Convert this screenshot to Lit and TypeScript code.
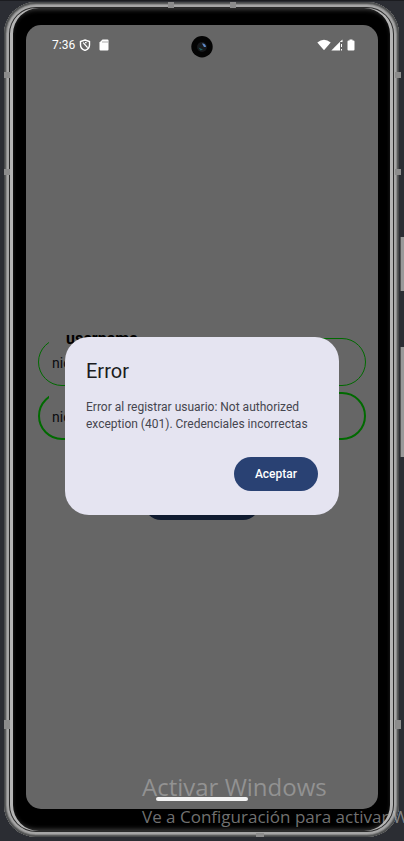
import { LitElement, html, css, svg } from "lit";
import { customElement, state } from "lit/decorators.js";

const shieldIcon = svg`<path d="M6 1 L10.500 2.500 V6 C10.500 8.600 8.600 10.500 6 11.400 C3.400 10.500 1.500 8.600 1.500 6 V2.500 Z" fill="none" stroke="#fff" stroke-width="1.400"/><path d="M4.200 3.600 L8.600 8.600 M6 3.600 L7.600 3.600" fill="none" stroke="#fff" stroke-width="1.300"/>`;

@customElement("phone-status")
class PhoneStatus extends LitElement {
  static styles = css`
    :host {
      display: flex;
      align-items: center;
      justify-content: space-between;
      height: 39px;
      padding: 0 23px 0 26px;
      color: #fff;
      font: 12px/16px Roboto, sans-serif;
    }
    .group { display: flex; align-items: center; }
    svg { display: block; }
    .shield { margin-left: 4px; }
    .card { margin-left: 7px; }
    .battery { margin-left: 4px; }
  `;
  render() {
    return html`
      <div class="group">
        <span>7:36</span>
        <svg class="shield" width="12" height="12" viewBox="0 0 12 12">${shieldIcon}</svg>
        <svg class="card" width="12" height="12" viewBox="0 0 12 12">
          <path d="M4.500 0.500 H9.500 Q10.500 0.500 10.500 1.500 V10.500 Q10.500 11.500 9.500 11.500 H2.500 Q1.500 11.500 1.500 10.500 V3.500 Z" fill="#fff"/>
          <path d="M5 2 V4 M7 2 V4 M9 2 V4" stroke="#888" stroke-width="0.700"/>
        </svg>
      </div>
      <div class="group">
        <svg width="14" height="12" viewBox="0 0 14 12">
          <path d="M0.300 3.500 Q7 -1.800 13.700 3.500 L7 11.200 Z" fill="#fff"/>
        </svg>
        <svg width="12" height="12" viewBox="0 0 12 12">
          <path d="M0.300 11.500 L9 2.800 V11.500 Z" fill="#fff"/>
          <path d="M9 2.800 L11.500 0.500 V3 H9 Z M10 5 H11 V8 H10 Z M10 10 H11 V11.500 H10 Z" fill="#fff"/>
        </svg>
        <svg class="battery" width="8" height="12" viewBox="0 0 8 12">
          <path d="M2.500 0.500 H5.500 V1.500 H6.500 Q7.500 1.500 7.500 2.500 V10.500 Q7.500 11.500 6.500 11.500 H1.500 Q0.500 11.500 0.500 10.500 V2.500 Q0.500 1.500 1.500 1.500 H2.500 Z" fill="#fff"/>
        </svg>
      </div>
    `;
  }
}

@customElement("login-form")
class LoginForm extends LitElement {
  static styles = css`
    form {
      display: flex;
      flex-direction: column;
      gap: 2px;
      margin: 0;
      padding-top: 1px;
      font-family: Roboto, sans-serif;
    }
    fieldset {
      min-width: 0;
      margin: 0;
      padding: 0 13px;
      border: 1px solid #006a00;
      border-radius: 24px;
    }
    fieldset.focused { padding: 0 12px; border-width: 2px; }
    legend {
      height: 10px;
      margin-left: -3px;
      padding: 0 17px;
      color: #000;
      font-size: 16px;
      font-weight: 700;
      line-height: 10px;
    }
    input {
      display: block;
      box-sizing: border-box;
      width: 100%;
      height: 41px;
      padding: 0 0 2px;
      border: 0;
      outline: 0;
      background: none;
      color: #0b0c0f;
      font: 14px/20px Roboto, sans-serif;
    }
    .focused input { height: 40px; }
    button {
      align-self: center;
      width: 116px;
      height: 34px;
      margin-top: 44px;
      border: 0;
      border-radius: 17px;
      background: #101b30;
      color: #666;
      font: 500 12px/16px Roboto, sans-serif;
    }
  `;
  render() {
    return html`
      <form @submit=${(e: Event) => e.preventDefault()}>
        <fieldset>
          <legend>username</legend>
          <input type="text" aria-label="username" .value=${"nico"} />
        </fieldset>
        <fieldset class="focused">
          <legend>password</legend>
          <input type="text" aria-label="password" .value=${"nico"} />
        </fieldset>
        <button type="submit">Registrar</button>
      </form>
    `;
  }
}

@customElement("app-root")
class AppRoot extends LitElement {
  @state() private open = true;

  static styles = css`
    :host {
      display: flex;
      position: relative;
      box-sizing: border-box;
      min-height: 100vh;
      padding: 1px 5px 4px 4px;
      border-top: 1px solid #1b1c20;
      overflow: hidden;
      background: #2b2d33;
    }
    .phone {
      display: flex;
      flex: 1;
      position: relative;
      box-sizing: border-box;
      min-width: 0;
      padding: 23px 21px 28px 22px;
      border-radius: 32px;
      background: #000;
      box-shadow:
        inset 0 0 0 1px #484a4b,
        inset 0 0 0 2px #5c5d5d,
        inset 0 0 0 3px #8a8a8a,
        inset 0 0 0 5px #a6a6a6,
        inset 0 0 0 6px #2a2a2a,
        inset 3px 0 0 6px #b4b4b4,
        inset -3px 0 0 6px #b4b4b4,
        inset 0 0 4px 8px #3a3a3a;
    }
    .screen {
      display: flex;
      flex: 1;
      flex-direction: column;
      position: relative;
      min-width: 0;
      border-radius: 15px;
      background: #666;
      overflow: hidden;
    }
    .camera {
      position: absolute;
      top: 11px;
      left: 50%;
      margin-left: -11px;
    }
    main {
      display: grid;
      flex: 1;
      align-items: center;
      margin-top: -21px;
    }
    login-form { grid-area: 1 / 1; padding: 0 12px; }
    dialog {
      display: block;
      position: relative;
      grid-area: 1 / 1;
      box-sizing: border-box;
      width: auto;
      margin: 0 39px;
      padding: 21px 21px 24px;
      border: 0;
      border-radius: 24px;
      background: #e5e4f1;
      color: #1a1b21;
      font-family: Roboto, sans-serif;
    }
    dialog:not([open]) { display: none; }
    h1 { margin: 0; font-size: 20px; font-weight: 400; line-height: 27px; }
    p { margin: 14px 0 24px; color: #45464f; font-size: 12px; line-height: 17px; }
    .actions { display: flex; justify-content: flex-end; }
    .actions button {
      height: 34px;
      padding: 0 21px;
      border: 0;
      border-radius: 17px;
      background: #294173;
      color: #fff;
      font: 500 12px/16px Roboto, sans-serif;
    }
    .handle {
      position: absolute;
      bottom: 40px;
      left: 50%;
      width: 92px;
      height: 4px;
      margin-left: -46px;
      border-radius: 2px;
      background: #f4f4f4;
    }
    .watermark {
      position: absolute;
      left: 142px;
      bottom: 10px;
      color: rgba(190, 190, 190, 0.5);
      font-family: "Open Sans", sans-serif;
      white-space: nowrap;
      pointer-events: none;
    }
    .big { font-size: 24px; line-height: 32px; }
    .small { color: rgba(190, 190, 190, 0.6); font-size: 17px; line-height: 28px; }
    .mark { position: absolute; width: 6px; height: 6px; background: #8c8c8c; }
    .left { left: 0; }
    .right { right: -2px; }
    .high { top: 70px; }
    .mid { top: 167px; }
    .low { bottom: 108px; height: 9px; }
    .top-a { top: 0; left: 164px; }
    .top-b { top: 0; left: 226px; }
    .base { bottom: 0; left: 252px; width: 8px; height: 4px; }
    .key {
      position: absolute;
      right: 0;
      width: 4px;
      border-left: 1px solid #555;
      box-sizing: border-box;
      background: #999;
    }
    .power { top: 236px; height: 54px; }
    .volume { top: 346px; height: 110px; }
  `;

  render() {
    return html`
      <div class="phone">
        <span class="mark left high"></span>
        <span class="mark left mid"></span>
        <span class="mark left low"></span>
        <span class="mark right high"></span>
        <span class="mark right mid"></span>
        <span class="mark right low"></span>
        <span class="mark top-a"></span>
        <span class="mark top-b"></span>
        <span class="mark base"></span>
        <div class="screen">
          <phone-status></phone-status>
          <svg class="camera" width="22" height="22" viewBox="0 0 22 22">
            <circle cx="11" cy="10.700" r="10.700" fill="#040404"/>
            <circle cx="11" cy="11" r="5" fill="#17191c"/>
            <path d="M11 7.500 Q14.500 7 15 11 L13 11 Z" fill="#5d8ac8"/>
            <path d="M7.500 11.500 L12 13.500 L9.500 14.500 Z" fill="#1d5a5c"/>
          </svg>
          <main>
            <login-form></login-form>
            <dialog ?open=${this.open} aria-labelledby="title">
              <h1 id="title">Error</h1>
              <p>Error al registrar usuario: Not authorized exception (401). Credenciales incorrectas</p>
              <div class="actions">
                <button type="button" @click=${() => (this.open = false)}>Aceptar</button>
              </div>
            </dialog>
          </main>
        </div>
      </div>
      <span class="key power"></span>
      <span class="key volume"></span>
      <div class="watermark">
        <div class="big">Activar Windows</div>
        <div class="small">Ve a Configuración para activar Windows.</div>
      </div>
      <div class="handle"></div>
    `;
  }
}
